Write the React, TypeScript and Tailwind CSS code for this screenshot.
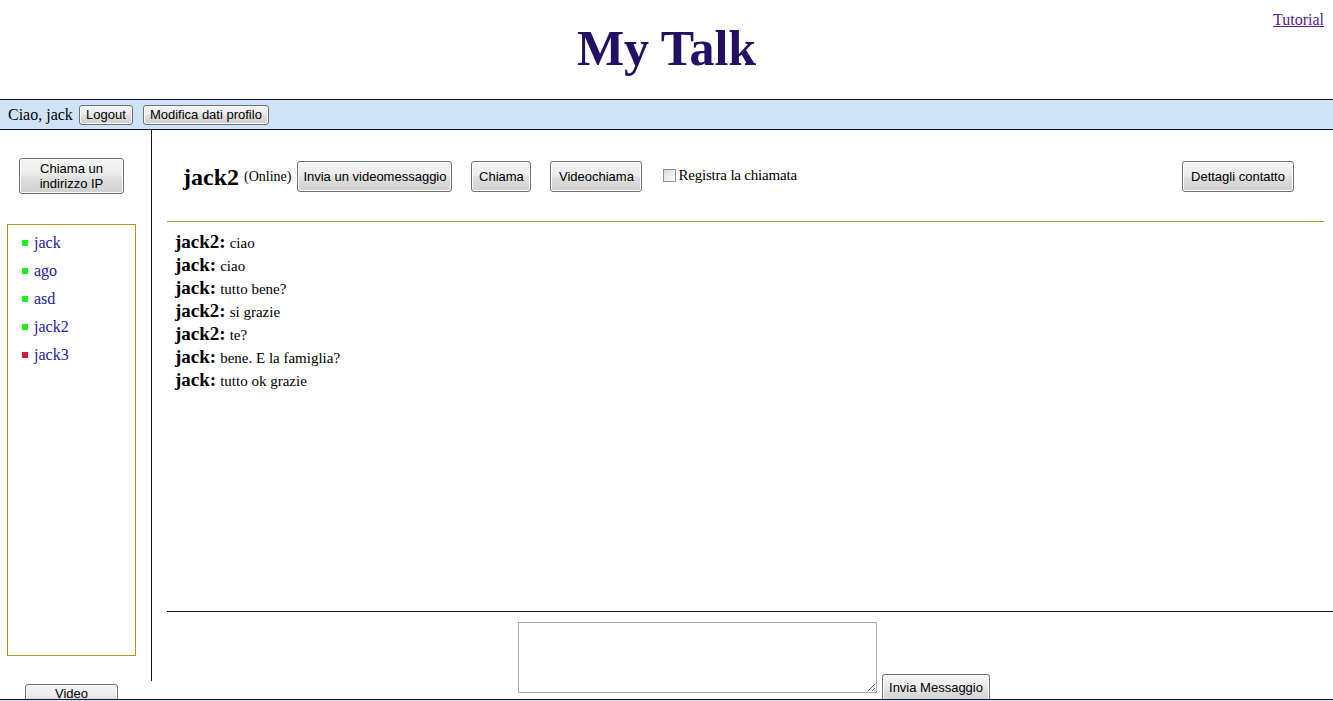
const serif = "font-['Liberation_Serif',serif]";
const btn =
  "rounded-[3px] border border-[#707070] bg-[linear-gradient(#f4f4f4,#ececec_45%,#dedede_55%,#d0d0d0)] text-black font-['Liberation_Sans',Arial,sans-serif] text-[13px] leading-[15px] shadow-[inset_0_0_0_1px_#fcfcfc]";

type Contact = { name: string; online: boolean };

const contacts: Contact[] = [
  { name: "jack", online: true },
  { name: "ago", online: true },
  { name: "asd", online: true },
  { name: "jack2", online: true },
  { name: "jack3", online: false }
];

const messages = [
  { from: "jack2", text: "ciao" },
  { from: "jack", text: "ciao" },
  { from: "jack", text: "tutto bene?" },
  { from: "jack2", text: "si grazie" },
  { from: "jack2", text: "te?" },
  { from: "jack", text: "bene. E la famiglia?" },
  { from: "jack", text: "tutto ok grazie" }
];

function Sidebar() {
  return (
    <div className="flex w-[152px] shrink-0 flex-col">
      <div className="h-[551px] shrink-0 border-r border-[#1a1035] pl-[7px] pt-[28px]">
        <button className={`${btn} ml-[12px] h-[36px] w-[105px]`}>
          Chiama un
          <br />
          indirizzo IP
        </button>
        <div className="mt-[29px] h-[432px] w-[129px] border border-[#a99425] pl-[14px] pt-[4px]">
          {contacts.map((c) => (
            <div key={c.name} className={`flex h-[28px] items-center ${serif} text-[16px] text-[#1a1aa0]`}>
              <span className={`mr-[6px] inline-block h-[6px] w-[6px] ${c.online ? "bg-[#1ef21e]" : "bg-[#d0173f]"}`} />
              {c.name}
            </div>
          ))}
        </div>
      </div>
      <button className={`${btn} ml-[25px] mt-[3px] h-[26px] w-[93px] shrink-0 pb-[8px]`}>Video</button>
    </div>
  );
}

function ChatHeader() {
  return (
    <div className="mr-[9px] flex h-[92px] items-start border-b border-[#a99425] pl-[16px] pt-[31px]">
      <div className={`flex h-[31px] items-center ${serif}`}>
        <span className="text-[24px] font-bold leading-none">jack2</span>
        <span className="ml-[5px] text-[14px]">(Online)</span>
      </div>
      <button className={`${btn} ml-[6px] h-[31px] w-[155px]`}>Invia un videomessaggio</button>
      <button className={`${btn} ml-[19px] h-[31px] w-[60px]`}>Chiama</button>
      <button className={`${btn} ml-[19px] h-[31px] w-[92px]`}>Videochiama</button>
      <label className={`ml-[21px] flex h-[28px] items-center ${serif} text-[15px] tracking-[-0.2px]`}>
        <span className="mr-[2px] inline-block h-[13px] w-[13px] border border-[#8f8f8f] bg-[linear-gradient(135deg,#dcdcdc,#ffffff)]" />
        Registra la chiamata
      </label>
      <button className={`${btn} ml-auto mr-[30px] h-[31px] w-[112px]`}>Dettagli contatto</button>
    </div>
  );
}

function Messages() {
  return (
    <div className={`h-[390px] border-b border-[#1a1035] pl-[8px] pt-[8px] ${serif}`}>
      {messages.map((m, i) => (
        <div key={i} className="h-[23px] leading-[23px]">
          <span className="text-[19px] font-bold">{m.from}:</span>{" "}
          <span className="text-[15px]">{m.text}</span>
        </div>
      ))}
    </div>
  );
}

function Composer() {
  return (
    <div className="flex items-start pl-[351px] pt-[10px]">
      <textarea className="h-[71px] w-[359px] shrink-0 resize border border-[#a9a9a9] bg-white outline-none" />
      <button className={`${btn} ml-[5px] mt-[52px] h-[30px] w-[108px] shrink-0 pb-[4px]`}>Invia Messaggio</button>
    </div>
  );
}

export default function App() {
  return (
    <div className={`h-[701px] w-full overflow-hidden bg-white text-black ${serif}`}>
      <div className="relative flex h-[99px] justify-center pt-[23px]">
        <h1 className="text-[50px] font-bold leading-[50px] text-[#230f64]">My Talk</h1>
        <a href="#" className="absolute right-[9px] top-[8px] text-[16px] text-[#551a8b] underline">
          Tutorial
        </a>
      </div>
      <div className="flex h-[31px] items-center border-y border-[#1a1035] bg-[#cfe3f7] pl-[8px]">
        <span className="text-[16px]">Ciao, jack</span>
        <button className={`${btn} ml-[6px] h-[20px] w-[54px]`}>Logout</button>
        <button className={`${btn} ml-[10px] h-[20px] w-[126px]`}>Modifica dati profilo</button>
      </div>
      <div className="flex h-[569px] overflow-hidden">
        <Sidebar />
        <div className="flex-1 pl-[15px]">
          <ChatHeader />
          <Messages />
          <Composer />
        </div>
      </div>
      <div className="h-[2px] border-t border-[#1a1035] bg-[#cfe3f7]" />
    </div>
  );
}
